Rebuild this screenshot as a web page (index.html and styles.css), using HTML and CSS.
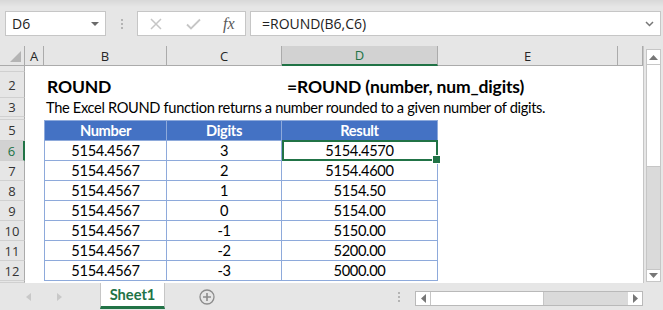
FILE: index.html
```html
<!DOCTYPE html>
<html lang="en">
<head>
  <meta charset="UTF-8">
  <title>ROUND Function</title>
  <link rel="stylesheet" href="styles.css">
</head>
<body>
  <div class="app">
    <!-- formula bar -->
    <div class="fbar">
      <div class="namebox"><span>D6</span><span class="dd"></span></div>
      <div class="grip"><i></i><i></i><i></i></div>
      <div class="fbtns">
        <svg class="ico-x" width="12" height="12" viewBox="0 0 12 12"><path d="M1 1L11 11M11 1L1 11" stroke="#c6c6c6" stroke-width="1.5" fill="none"/></svg>
        <svg class="ico-ok" width="15" height="12" viewBox="0 0 15 12"><path d="M1 6.5L5 10.5L14 1.5" stroke="#c6c6c6" stroke-width="1.8" fill="none"/></svg>
        <span class="fx">fx</span>
      </div>
      <div class="formula">
        <span>=ROUND(B6,C6)</span>
        <svg width="9" height="6" viewBox="0 0 9 6"><path d="M1 1L4.5 4.5L8 1" stroke="#777" stroke-width="1.5" fill="none"/></svg>
      </div>
    </div>

    <div class="main">
      <div class="grid">
        <div class="row colhead">
          <div class="corner"></div>
          <div class="ch">A</div>
          <div class="ch">B</div>
          <div class="ch">C</div>
          <div class="ch act">D</div>
          <div class="ch">E</div>
          <div class="ch"></div>
        </div>
        <div class="row r1"><div class="rh"></div></div>
        <div class="row r2">
          <div class="rh">2</div>
          <div></div>
          <div class="title">ROUND</div>
          <div></div>
          <div class="title syntax">=ROUND (number, num_digits)</div>
        </div>
        <div class="row r3">
          <div class="rh">3</div>
          <div></div>
          <div class="desc">The Excel ROUND function returns a number rounded to a given number of digits.</div>
        </div>
        <div class="row r4"><div class="rh"></div></div>
        <div class="row hd">
          <div class="rh">5</div>
          <div></div>
          <div class="c first">Number</div>
          <div class="c">Digits</div>
          <div class="c">Result</div>
        </div>
        <div class="row d">
          <div class="rh act">6</div>
          <div></div>
          <div class="c first">5154.4567</div>
          <div class="c">3</div>
          <div class="c sel">5154.4570</div>
        </div>
        <div class="row d">
          <div class="rh">7</div>
          <div></div>
          <div class="c first">5154.4567</div>
          <div class="c">2</div>
          <div class="c">5154.4600</div>
        </div>
        <div class="row d">
          <div class="rh">8</div>
          <div></div>
          <div class="c first">5154.4567</div>
          <div class="c">1</div>
          <div class="c">5154.50</div>
        </div>
        <div class="row d">
          <div class="rh">9</div>
          <div></div>
          <div class="c first">5154.4567</div>
          <div class="c">0</div>
          <div class="c">5154.00</div>
        </div>
        <div class="row d">
          <div class="rh">10</div>
          <div></div>
          <div class="c first">5154.4567</div>
          <div class="c">-1</div>
          <div class="c">5150.00</div>
        </div>
        <div class="row d">
          <div class="rh">11</div>
          <div></div>
          <div class="c first">5154.4567</div>
          <div class="c">-2</div>
          <div class="c">5200.00</div>
        </div>
        <div class="row d">
          <div class="rh">12</div>
          <div></div>
          <div class="c first">5154.4567</div>
          <div class="c">-3</div>
          <div class="c">5000.00</div>
        </div>
        <div class="row r13"><div class="rh"></div></div>
      </div>

      <div class="vscroll">
        <div class="sbtn"><svg width="9" height="5" viewBox="0 0 9 5"><path d="M0 5L4.5 0L9 5Z" fill="#777"/></svg></div>
        <div class="vthumb"></div>
        <div class="vtrack"></div>
        <div class="sbtn down"><svg width="9" height="5" viewBox="0 0 9 5"><path d="M0 0L4.5 5L9 0Z" fill="#777"/></svg></div>
      </div>
    </div>

    <!-- sheet tabs -->
    <div class="tabbar">
      <div class="nav">
        <svg width="100" height="27" viewBox="0 0 100 27"><path d="M31 10L26 14L31 18Z" fill="#c8c8c8"/><path d="M57 10L62 14L57 18Z" fill="#c8c8c8"/></svg>
      </div>
      <div class="tab">Sheet1</div>
      <svg class="add" width="16" height="16" viewBox="0 0 16 16"><circle cx="8" cy="8" r="7" stroke="#8c8c8c" stroke-width="1.3" fill="none"/><path d="M8 4V12M4 8H12" stroke="#8c8c8c" stroke-width="1.6"/></svg>
      <div class="grip hgrip"><i></i><i></i><i></i></div>
      <div class="hscroll">
        <div class="sbtn"><svg width="5" height="9" viewBox="0 0 5 9"><path d="M5 0L0 4.5L5 9Z" fill="#777"/></svg></div>
        <div class="hthumb"></div>
        <div class="htrack"></div>
        <div class="sbtn"><svg width="5" height="9" viewBox="0 0 5 9"><path d="M0 0L5 4.5L0 9Z" fill="#777"/></svg></div>
      </div>
    </div>
  </div>
</body>
</html>
```

FILE: styles.css
```css
* {
  box-sizing: border-box;
}

body {
  margin: 0;
  width: 663px;
  height: 310px;
  overflow: hidden;
  background: #e6e6e6;
  font-family: 'Open Sans', sans-serif;
  color: #222;
}

.app {
  display: flex;
  flex-direction: column;
  height: 310px;
}

/* formula bar */
.fbar {
  height: 46px;
  display: flex;
  align-items: flex-start;
  padding: 11px 2px 0 5px;
  background: linear-gradient(#d8d8d8, #e6e6e6 7px);
}

.namebox {
  width: 101px;
  height: 25px;
  background: #fff;
  border: 1px solid #c6c6c6;
  display: flex;
  align-items: center;
  justify-content: space-between;
  padding: 0 6px;
  font-size: 14px;
}

.dd {
  width: 0;
  height: 0;
  border-left: 4px solid transparent;
  border-right: 4px solid transparent;
  border-top: 4px solid #6a6a6a;
}

.grip {
  width: 31px;
  height: 25px;
  display: flex;
  flex-direction: column;
  align-items: center;
  justify-content: center;
  gap: 2px;
}

.grip i {
  width: 2px;
  height: 2px;
  background: #b4b4b4;
}

.fbtns {
  width: 109px;
  height: 25px;
  background: #fff;
  border: 1px solid #c6c6c6;
  display: flex;
  align-items: center;
  padding-left: 12px;
}

.ico-ok {
  margin-left: 24px;
}

.fx {
  margin-left: 22px;
  font-family: 'Liberation Serif', serif;
  font-style: italic;
  font-size: 16px;
  color: #595959;
}

.formula {
  width: 411px;
  height: 25px;
  margin-left: 4px;
  background: #fff;
  border: 1px solid #c6c6c6;
  display: flex;
  align-items: center;
  justify-content: space-between;
  padding: 0 6px 0 11px;
  font-size: 14px;
}

/* sheet */
.main {
  display: flex;
  height: 237px;
}

.grid {
  width: 644px;
  background: #fff;
  border-right: 1px solid #c6c6c6;
  font-family: 'Lato', sans-serif;
  font-size: 14.67px;
  letter-spacing: -0.35px;
  color: #000;
}

.row {
  display: grid;
  grid-template-columns: 25px 19px 123px 115px 156px 180px 25px;
  height: 20px;
}

.row > div {
  display: flex;
  align-items: center;
  white-space: nowrap;
}

.colhead {
  background: #e6e6e6;
  font-family: 'Open Sans', sans-serif;
  font-size: 13px;
  letter-spacing: 0;
  color: #262626;
}

.colhead > div {
  justify-content: center;
  border-right: 1px solid #ababab;
  border-bottom: 1px solid #ababab;
}

.corner {
  position: relative;
}

.corner::after {
  content: "";
  position: absolute;
  right: 3px;
  bottom: 3px;
  border-left: 11px solid transparent;
  border-bottom: 11px solid #b4b4b4;
}

.ch.act {
  background: #d2d2d2;
  color: #217346;
  border-bottom: 2px solid #217346;
}

.rh {
  justify-content: center;
  background: #e6e6e6;
  border-right: 1px solid #ababab;
  border-bottom: 1px solid #d0d0d0;
  font-family: 'Open Sans', sans-serif;
  font-size: 13px;
  letter-spacing: 0;
  color: #333;
}

.rh.act {
  background: #d2d2d2;
  color: #217346;
  border-right: 2px solid #217346;
}

.r1 {
  height: 6px;
}

.r2 {
  height: 26px;
}

.r3 {
  height: 19px;
}

.r4 {
  height: 3px;
}

.r13 {
  height: 2px;
}

.title {
  font-weight: bold;
  font-size: 17.5px;
  letter-spacing: -0.15px;
  padding-left: 3px;
  padding-top: 2px;
}

.syntax {
  padding-left: 5px;
}

.desc {
  grid-column: 3 / span 5;
  padding-left: 2px;
}

.c {
  justify-content: center;
  border-right: 1px solid #8eaadb;
  border-bottom: 1px solid #8eaadb;
}

.c.first {
  border-left: 1px solid #8eaadb;
}

.hd {
  height: 21px;
}

.hd .c {
  background: #4472c4;
  color: #fff;
  font-weight: bold;
  border-top: 1px solid #8eaadb;
}

.sel {
  position: relative;
}

.sel::before {
  content: "";
  position: absolute;
  top: -1px;
  left: 0;
  right: -1px;
  bottom: -1px;
  border: 2px solid #217346;
}

.sel::after {
  content: "";
  position: absolute;
  right: -4px;
  bottom: -4px;
  width: 7px;
  height: 7px;
  background: #217346;
  border: 1px solid #fff;
}

/* scrollbars */
.vscroll {
  width: 15px;
  margin: 3px 0 1px 2px;
  display: flex;
  flex-direction: column;
  background: #dadada;
  border: 1px solid #c6c6c6;
}

.sbtn {
  background: #fff;
  display: flex;
  align-items: center;
  justify-content: center;
}

.vscroll .sbtn {
  height: 14px;
}

.vscroll .sbtn.down {
  height: 12px;
  border-top: 1px solid #c6c6c6;
}

.vthumb {
  height: 103px;
  background: #fff;
  border-top: 1px solid #c6c6c6;
  border-bottom: 1px solid #c6c6c6;
}

.vtrack {
  flex: 1;
}

/* tab bar */
.tabbar {
  height: 27px;
  display: flex;
  align-items: flex-start;
}

.nav {
  width: 100px;
  height: 27px;
}

.nav svg {
  display: block;
}

.tab {
  width: 65px;
  height: 26px;
  background: #fff;
  border-left: 1px solid #c6c6c6;
  border-right: 1px solid #c6c6c6;
  border-bottom: 3px solid #217346;
  display: flex;
  align-items: center;
  justify-content: center;
  font-family: 'Lato', sans-serif;
  font-weight: bold;
  font-size: 14.67px;
  color: #217346;
}

.add {
  margin: 6px 0 0 34px;
}

.hgrip {
  width: 4px;
  height: 27px;
  margin-left: 182px;
}

.hscroll {
  width: 228px;
  height: 15px;
  margin: 8px 0 0 14px;
  display: flex;
  background: #dadada;
  border: 1px solid #b9b9b9;
}

.hscroll .sbtn {
  width: 14px;
}

.hthumb {
  width: 114px;
  background: #fff;
  border-left: 1px solid #c6c6c6;
  border-right: 1px solid #c6c6c6;
}

.htrack {
  flex: 1;
}
```
